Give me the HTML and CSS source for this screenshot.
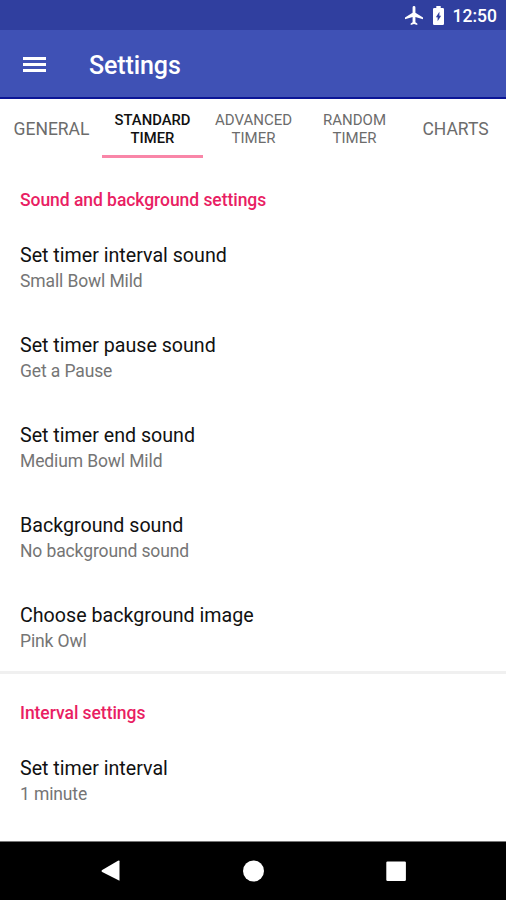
FILE: index.html
```html
<!DOCTYPE html>
<html lang="en">
<head>
    <meta charset="UTF-8">
    <meta name="viewport" content="width=device-width, initial-scale=1.0">
    <title>Settings</title>
    <link rel="stylesheet" href="styles.css">
</head>
<body>
    <div class="status-bar">
        <svg class="airplane" viewBox="2 2 19 20"><path d="M21 16v-2l-8-5V3.500a1.500 1.500 0 0 0-3 0V9l-8 5v2l8-2.500V19l-2 1.500V22l3.500-1 3.500 1v-1.500L13 19v-5.500z"/></svg>
        <svg class="battery" viewBox="7 2 10 20" preserveAspectRatio="none"><path fill-rule="evenodd" d="M15.670 4H14V2h-4v2H8.330C7.600 4 7 4.600 7 5.330v15.330C7 21.400 7.600 22 8.330 22h7.330c.740 0 1.340-.600 1.340-1.330V5.330C17 4.600 16.400 4 15.670 4zM11.200 18v-4.200H9.600L12.800 8v4.200h1.600L11.200 18z"/></svg>
        <span class="clock">12:50</span>
    </div>
    <header class="toolbar">
        <button class="menu" aria-label="Menu">
            <span></span>
            <span></span>
            <span></span>
        </button>
        <h1>Settings</h1>
    </header>
    <nav class="tabs">
        <button class="tab">GENERAL</button>
        <button class="tab two-line active">STANDARD<br>TIMER</button>
        <button class="tab two-line">ADVANCED<br>TIMER</button>
        <button class="tab two-line">RANDOM<br>TIMER</button>
        <button class="tab">CHARTS</button>
    </nav>
    <main class="content">
        <section>
            <h2>Sound and background settings</h2>
            <div class="item">
                <div class="title">Set timer interval sound</div>
                <div class="summary">Small Bowl Mild</div>
            </div>
            <div class="item">
                <div class="title">Set timer pause sound</div>
                <div class="summary">Get a Pause</div>
            </div>
            <div class="item">
                <div class="title">Set timer end sound</div>
                <div class="summary">Medium Bowl Mild</div>
            </div>
            <div class="item">
                <div class="title">Background sound</div>
                <div class="summary">No background sound</div>
            </div>
            <div class="item">
                <div class="title">Choose background image</div>
                <div class="summary">Pink Owl</div>
            </div>
        </section>
        <section>
            <h2>Interval settings</h2>
            <div class="item">
                <div class="title">Set timer interval</div>
                <div class="summary">1 minute</div>
            </div>
        </section>
    </main>
    <footer class="nav-bar">
        <svg viewBox="0 0 24 24"><path d="M21.500 2.200v19.600L4.200 13q-1.600-1 0-2L20 1.800q1.500-.800 1.500.400z"/></svg>
        <svg viewBox="0 0 24 24"><circle cx="12.500" cy="12" r="10.500"/></svg>
        <svg viewBox="0 0 24 24"><rect x="2.300" y="2.500" width="19.600" height="19.400" rx="1.200"/></svg>
    </footer>
</body>
</html>
```
FILE: styles.css
```css
body {
    display: flex;
    flex-direction: column;
    height: 900px;
    margin: 0;
    overflow: hidden;
    background-color: #fff;
    color: #000;
    font-family: Roboto, sans-serif;
}

button {
    padding: 0;
    border: none;
    background: none;
    font-family: inherit;
}

.status-bar {
    display: flex;
    flex: none;
    justify-content: flex-end;
    align-items: center;
    box-sizing: border-box;
    height: 30px;
    padding: 1px 9px 0 0;
    background-color: #303f9f;
    color: #fff;
}

.status-bar svg {
    fill: #fff;
}

.airplane {
    width: 18px;
    height: 19px;
    margin-right: 10px;
}

.battery {
    width: 11px;
    height: 19px;
    margin-right: 9px;
}

.clock {
    padding-top: 1px;
    font-size: 17.500px;
    font-weight: 500;
    line-height: 30px;
}

.toolbar {
    display: flex;
    flex: none;
    align-items: center;
    box-sizing: border-box;
    height: 69px;
    padding: 2px 0 0 23px;
    border-bottom: 2px solid #0b1596;
    background-color: #3f51b5;
    color: #fff;
}

.menu {
    display: flex;
    flex-direction: column;
    gap: 3px;
    width: 23px;
    margin-right: 43px;
}

.menu span {
    height: 3px;
    background-color: #fff;
}

h1 {
    margin: 2px 0 0;
    font-size: 25px;
    font-weight: 500;
    letter-spacing: -0.1px;
    line-height: 30px;
}

.tabs {
    display: grid;
    flex: none;
    grid-template-columns: repeat(5, 1fr);
    height: 59px;
    padding-left: 1px;
}

.tab {
    box-sizing: border-box;
    padding-top: 4px;
    border-bottom: 3px solid transparent;
    color: #6c6c6c;
    font-size: 17.500px;
    white-space: nowrap;
}

.two-line {
    font-size: 15px;
    line-height: 18px;
}

.active {
    border-bottom-color: #f986a8;
    color: #111;
    font-size: 14.800px;
    font-weight: 500;
}

.content {
    flex: 1;
    overflow: hidden;
    padding-top: 3px;
}

section + section {
    border-top: 3px solid #f0f0f0;
}

h2 {
    box-sizing: border-box;
    height: 61px;
    margin: 0;
    padding: 28px 20px 0;
    color: #e91e63;
    font-size: 17.500px;
    font-weight: 500;
    letter-spacing: -0.05px;
    line-height: 22px;
}

.item {
    box-sizing: border-box;
    height: 90px;
    padding: 22px 20px 0;
}

.item:last-child {
    height: 89px;
}

.title {
    color: #111;
    font-size: 19.650px;
    line-height: 24px;
}

.summary {
    margin-top: 2px;
    color: #757575;
    font-size: 17.500px;
    letter-spacing: -0.12px;
    line-height: 22px;
}

.nav-bar {
    display: flex;
    flex: none;
    justify-content: center;
    align-items: center;
    gap: 119px;
    box-sizing: border-box;
    height: 59px;
    border-top: 1px solid #777;
    background-color: #000;
}

.nav-bar svg {
    width: 24px;
    height: 24px;
    fill: #fff;
}
```
